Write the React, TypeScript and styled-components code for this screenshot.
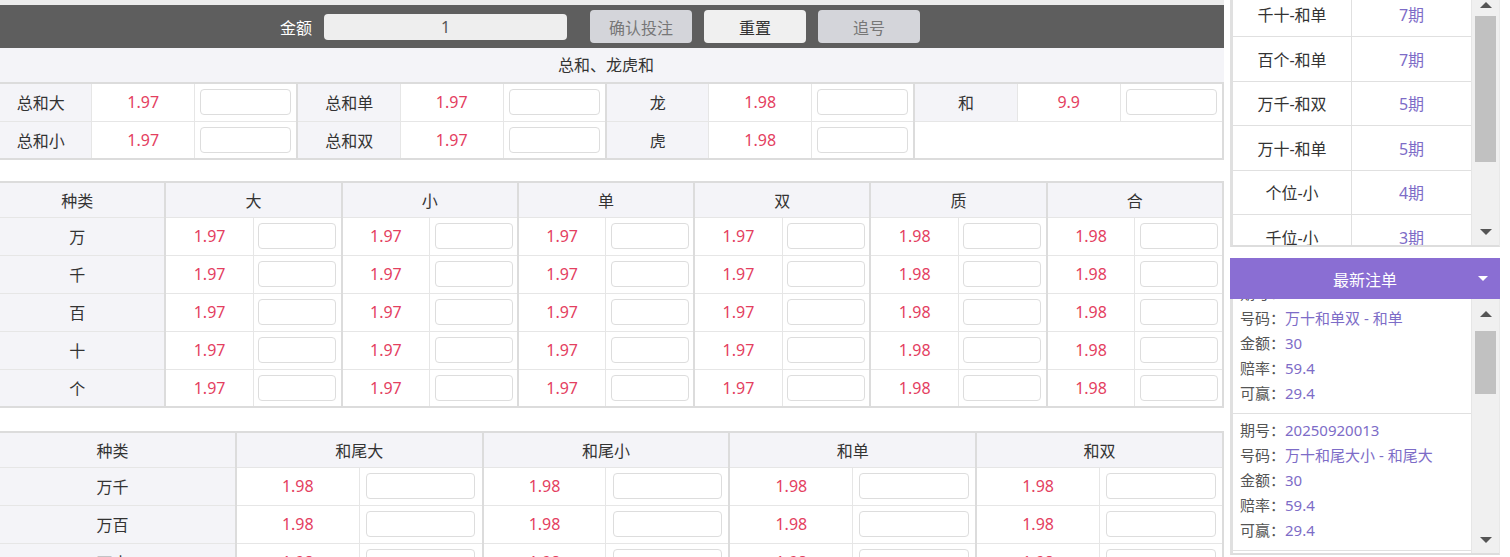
import React, { useLayoutEffect, useRef } from "react";
import styled, { createGlobalStyle } from "styled-components";

const GlobalStyle = createGlobalStyle`
  *, *::before, *::after { box-sizing: border-box; }
  html, body { margin: 0; padding: 0; background: #ffffff; overflow: hidden; }
  body {
    font-family: "Noto Sans", "Noto Sans CJK SC", sans-serif;
    font-size: 16px;
    color: #333333;
  }
  input, button { font-family: inherit; }
`;

const RED = "#e4405f";
const PURPLE = "#7d6cc7";
const SOFT = "#e6e6e6";
const STRONG = "#dcdcdc";
const SHADE = "#f4f4f8";

const Page = styled.div`
  display: flex;
  align-items: flex-start;
  gap: 6px;
  margin-left: -12px;
  width: 1522px;
  height: 557px;
  overflow: hidden;
`;

const Main = styled.main`
  flex: 0 0 1236px;
  border-top: 5px solid #ececec;
`;

const Toolbar = styled.div`
  height: 43px;
  background: #5e5e5e;
  display: flex;
  align-items: center;
  padding-left: 292px;
`;

const AmountLabel = styled.span`
  color: #ffffff;
  font-size: 16px;
  margin-right: 12px;
`;

const AmountInput = styled.input`
  width: 243px;
  height: 26px;
  border: none;
  border-radius: 4px;
  background: #eeeeee;
  text-align: center;
  font-size: 16px;
  color: #555555;
  margin-right: 23px;
  outline: none;
`;

const ActionButton = styled.button<{ $light?: boolean }>`
  width: 102px;
  height: 33px;
  border: none;
  border-radius: 4px;
  margin-right: 12px;
  font-size: 16px;
  background: ${(p) => (p.$light ? "#f0f0f0" : "#d4d5da")};
  color: ${(p) => (p.$light ? "#333333" : "#777777")};
  padding: 0;
`;

const SectionTitle = styled.div`
  height: 34px;
  line-height: 34px;
  background: ${SHADE};
  text-align: center;
  font-size: 16px;
  color: #333333;
`;

const DataTable = styled.table<{ $gap?: number }>`
  width: 100%;
  table-layout: fixed;
  border-collapse: collapse;
  border: 2px solid ${STRONG};
  margin-top: ${(p) => p.$gap ?? 0}px;
  font-size: 16px;
`;

const Col = styled.col<{ $w: string }>`
  width: ${(p) => p.$w};
`;

const HeadCell = styled.th`
  height: 35px;
  padding: 0;
  background: ${SHADE};
  font-weight: normal;
  color: #333333;
  border-left: 2px solid ${STRONG};
  border-bottom: 1px solid ${SOFT};
  text-align: center;
`;

const LabelCell = styled.td`
  height: 38px;
  padding: 0;
  background: ${SHADE};
  text-align: center;
  color: #333333;
  border-left: 2px solid ${STRONG};
  border-bottom: 1px solid ${SOFT};
`;

const OddsCell = styled.td<{ $strong?: boolean }>`
  height: 38px;
  padding: 0;
  text-align: center;
  color: ${RED};
  background: #ffffff;
  border-left: ${(p) => (p.$strong ? `2px solid ${STRONG}` : `1px solid ${SOFT}`)};
  border-bottom: 1px solid ${SOFT};
`;

const InputCell = styled.td`
  height: 38px;
  padding: 0;
  text-align: center;
  background: #ffffff;
  border-left: 1px solid ${SOFT};
  border-bottom: 1px solid ${SOFT};
`;

const EmptyCell = styled.td`
  background: #ffffff;
  border-left: 2px solid ${STRONG};
  border-bottom: 1px solid ${SOFT};
`;

const BetInput = styled.input`
  width: 90%;
  height: 26px;
  border: 1px solid #dddddd;
  border-radius: 4px;
  background: #ffffff;
  vertical-align: middle;
  outline: none;
`;

/* ---------- side panel ---------- */

const Side = styled.aside`
  flex: 0 0 270px;
  display: flex;
  flex-direction: column;
`;

const PanelBox = styled.div<{ $height: number }>`
  height: ${(p) => p.$height}px;
  display: flex;
  background: #ffffff;
  border-left: 3px solid #e0e0e0;
  border-right: 1px solid #e8e8e8;
  border-bottom: 2px solid #dddddd;
`;

const Viewport = styled.div`
  flex: 1;
  overflow: hidden;
`;

const Scrollbar = styled.div`
  flex: 0 0 28px;
  display: flex;
  flex-direction: column;
  align-items: center;
  background: #f0f0f0;
  border-left: 1px solid #e6e6e6;
`;

const ScrollButton = styled.div<{ $dir: "up" | "down"; $h: number }>`
  flex: 0 0 ${(p) => p.$h}px;
  width: 100%;
  display: flex;
  align-items: center;
  justify-content: center;
  &::before {
    content: "";
    width: 0;
    height: 0;
    border-left: 6px solid transparent;
    border-right: 6px solid transparent;
    ${(p) =>
      p.$dir === "up"
        ? "border-bottom: 6px solid #555555;"
        : "border-top: 6px solid #555555;"}
  }
`;

const ScrollThumb = styled.div<{ $gap: number; $h: number }>`
  flex: 0 0 ${(p) => p.$h}px;
  margin-top: ${(p) => p.$gap}px;
  width: 21px;
  background: #c1c1c1;
`;

const ScrollSpacer = styled.div`
  flex: 1;
`;

const TrendRow = styled.div`
  display: grid;
  grid-template-columns: 1fr 1fr;
  height: 44.5px;
  border-bottom: 1px solid #e0e0e0;
`;

const TrendName = styled.div`
  display: flex;
  align-items: center;
  justify-content: center;
  border-right: 1px solid #e0e0e0;
  color: #333333;
  font-size: 16px;
`;

const TrendValue = styled.div`
  display: flex;
  align-items: center;
  justify-content: center;
  color: ${PURPLE};
  font-size: 16px;
`;

const PanelHeader = styled.div`
  margin-top: 11px;
  height: 41px;
  background: #8a6ed3;
  color: #ffffff;
  font-size: 16px;
  display: grid;
  grid-template-columns: 1fr auto 1fr;
  align-items: center;
`;

const HeaderTitle = styled.span`
  grid-column: 2;
`;

const HeaderCaret = styled.span`
  grid-column: 3;
  justify-self: end;
  margin-right: 12px;
  width: 0;
  height: 0;
  border-left: 5px solid transparent;
  border-right: 5px solid transparent;
  border-top: 5px solid #ffffff;
`;

const Ticket = styled.div`
  padding: 4px 7px 7px;
  border-bottom: 1px solid #e0e0e0;
  font-size: 15px;
`;

const TicketLine = styled.div`
  height: 25px;
  line-height: 25px;
  white-space: nowrap;
`;

const TicketKey = styled.span`
  color: #555555;
`;

const TicketValue = styled.span`
  color: ${PURPLE};
`;

/* ---------- data ---------- */

const trends = [
  ["万百-和双", "8期"],
  ["千十-和单", "7期"],
  ["百个-和单", "7期"],
  ["万千-和双", "5期"],
  ["万十-和单", "5期"],
  ["个位-小", "4期"],
  ["千位-小", "3期"],
  ["百位-大", "3期"],
];

const tickets = [
  { period: "20250920013", code: "万十和单双 - 和单" },
  { period: "20250920013", code: "万十和尾大小 - 和尾大" },
  { period: "20250920013", code: "万千和单双 - 和双" },
];

const digitCols = [
  { name: "大", odds: "1.97" },
  { name: "小", odds: "1.97" },
  { name: "单", odds: "1.97" },
  { name: "双", odds: "1.97" },
  { name: "质", odds: "1.98" },
  { name: "合", odds: "1.98" },
];
const digitRows = ["万", "千", "百", "十", "个"];

const pairCols = ["和尾大", "和尾小", "和单", "和双"];
const pairRows = ["万千", "万百", "万十", "万个", "千百", "千十"];

function ScrollView({
  offset,
  children,
}: {
  offset: number;
  children: React.ReactNode;
}) {
  const ref = useRef<HTMLDivElement>(null);
  useLayoutEffect(() => {
    if (ref.current) ref.current.scrollTop = offset;
  }, [offset]);
  return <Viewport ref={ref}>{children}</Viewport>;
}

export default function App() {
  return (
    <>
      <GlobalStyle />
      <Page>
        <Main>
          <Toolbar>
            <AmountLabel>金额</AmountLabel>
            <AmountInput defaultValue="1" />
            <ActionButton>确认投注</ActionButton>
            <ActionButton $light>重置</ActionButton>
            <ActionButton>追号</ActionButton>
          </Toolbar>

          <SectionTitle>总和、龙虎和</SectionTitle>
          <DataTable>
            <colgroup>
              {Array.from({ length: 12 }).map((_, i) => (
                <Col key={i} $w="8.3333%" />
              ))}
            </colgroup>
            <tbody>
              <tr>
                <LabelCell>总和大</LabelCell>
                <OddsCell>1.97</OddsCell>
                <InputCell><BetInput /></InputCell>
                <LabelCell>总和单</LabelCell>
                <OddsCell>1.97</OddsCell>
                <InputCell><BetInput /></InputCell>
                <LabelCell>龙</LabelCell>
                <OddsCell>1.98</OddsCell>
                <InputCell><BetInput /></InputCell>
                <LabelCell>和</LabelCell>
                <OddsCell>9.9</OddsCell>
                <InputCell><BetInput /></InputCell>
              </tr>
              <tr>
                <LabelCell>总和小</LabelCell>
                <OddsCell>1.97</OddsCell>
                <InputCell><BetInput /></InputCell>
                <LabelCell>总和双</LabelCell>
                <OddsCell>1.97</OddsCell>
                <InputCell><BetInput /></InputCell>
                <LabelCell>虎</LabelCell>
                <OddsCell>1.98</OddsCell>
                <InputCell><BetInput /></InputCell>
                <EmptyCell colSpan={3} />
              </tr>
            </tbody>
          </DataTable>

          <DataTable $gap={21}>
            <colgroup>
              <Col $w="14.2857%" />
              {Array.from({ length: 12 }).map((_, i) => (
                <Col key={i} $w="7.1428%" />
              ))}
            </colgroup>
            <thead>
              <tr>
                <HeadCell>种类</HeadCell>
                {digitCols.map((c) => (
                  <HeadCell key={c.name} colSpan={2}>
                    {c.name}
                  </HeadCell>
                ))}
              </tr>
            </thead>
            <tbody>
              {digitRows.map((r) => (
                <tr key={r}>
                  <LabelCell>{r}</LabelCell>
                  {digitCols.map((c) => (
                    <React.Fragment key={c.name}>
                      <OddsCell $strong>{c.odds}</OddsCell>
                      <InputCell><BetInput /></InputCell>
                    </React.Fragment>
                  ))}
                </tr>
              ))}
            </tbody>
          </DataTable>

          <DataTable $gap={23}>
            <colgroup>
              <Col $w="20%" />
              {Array.from({ length: 8 }).map((_, i) => (
                <Col key={i} $w="10%" />
              ))}
            </colgroup>
            <thead>
              <tr>
                <HeadCell>种类</HeadCell>
                {pairCols.map((c) => (
                  <HeadCell key={c} colSpan={2}>
                    {c}
                  </HeadCell>
                ))}
              </tr>
            </thead>
            <tbody>
              {pairRows.map((r) => (
                <tr key={r}>
                  <LabelCell>{r}</LabelCell>
                  {pairCols.map((c) => (
                    <React.Fragment key={c}>
                      <OddsCell $strong>1.98</OddsCell>
                      <InputCell><BetInput /></InputCell>
                    </React.Fragment>
                  ))}
                </tr>
              ))}
            </tbody>
          </DataTable>
        </Main>

        <Side>
          <PanelBox $height={247}>
            <ScrollView offset={52}>
              {trends.map(([n, v]) => (
                <TrendRow key={n}>
                  <TrendName>{n}</TrendName>
                  <TrendValue>{v}</TrendValue>
                </TrendRow>
              ))}
            </ScrollView>
            <Scrollbar>
              <ScrollButton $dir="up" $h={10} />
              <ScrollThumb $gap={6} $h={146} />
              <ScrollSpacer />
              <ScrollButton $dir="down" $h={26} />
            </Scrollbar>
          </PanelBox>

          <PanelHeader>
            <HeaderTitle>最新注单</HeaderTitle>
            <HeaderCaret />
          </PanelHeader>

          <PanelBox $height={256}>
            <ScrollView offset={22}>
              {tickets.map((t, i) => (
                <Ticket key={i}>
                  <TicketLine>
                    <TicketKey>期号：</TicketKey>
                    <TicketValue>{t.period}</TicketValue>
                  </TicketLine>
                  <TicketLine>
                    <TicketKey>号码：</TicketKey>
                    <TicketValue>{t.code}</TicketValue>
                  </TicketLine>
                  <TicketLine>
                    <TicketKey>金额：</TicketKey>
                    <TicketValue>30</TicketValue>
                  </TicketLine>
                  <TicketLine>
                    <TicketKey>赔率：</TicketKey>
                    <TicketValue>59.4</TicketValue>
                  </TicketLine>
                  <TicketLine>
                    <TicketKey>可赢：</TicketKey>
                    <TicketValue>29.4</TicketValue>
                  </TicketLine>
                </Ticket>
              ))}
            </ScrollView>
            <Scrollbar>
              <ScrollButton $dir="up" $h={30} />
              <ScrollThumb $gap={2} $h={63} />
              <ScrollSpacer />
              <ScrollButton $dir="down" $h={26} />
            </Scrollbar>
          </PanelBox>
        </Side>
      </Page>
    </>
  );
}
